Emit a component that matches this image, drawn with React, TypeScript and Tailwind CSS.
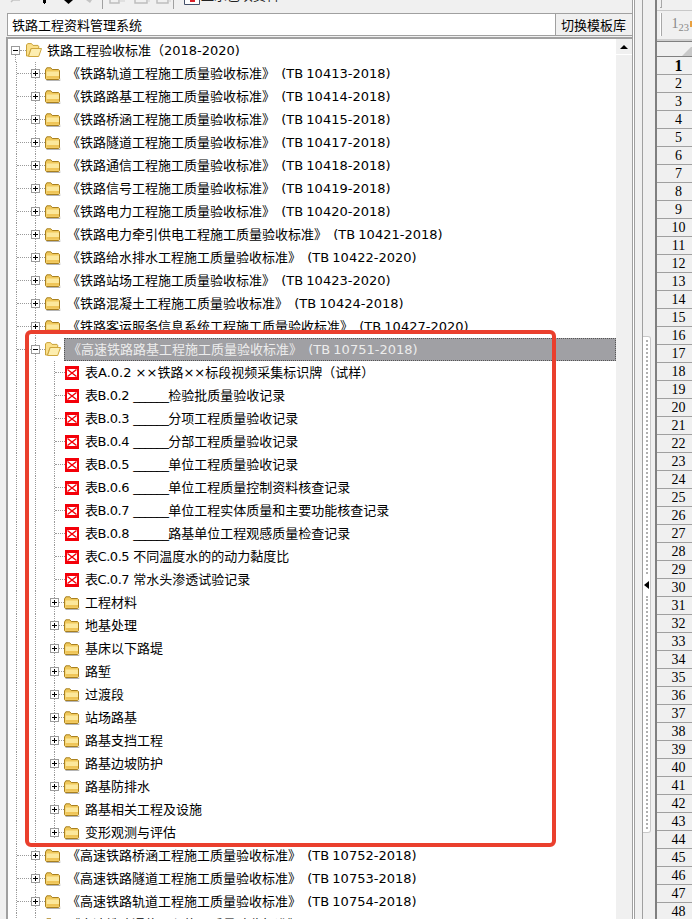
import type { ReactNode } from 'react';

const standards = [
  ['《铁路轨道工程施工质量验收标准》', '(TB 10413-2018)'],
  ['《铁路路基工程施工质量验收标准》', '(TB 10414-2018)'],
  ['《铁路桥涵工程施工质量验收标准》', '(TB 10415-2018)'],
  ['《铁路隧道工程施工质量验收标准》', '(TB 10417-2018)'],
  ['《铁路通信工程施工质量验收标准》', '(TB 10418-2018)'],
  ['《铁路信号工程施工质量验收标准》', '(TB 10419-2018)'],
  ['《铁路电力工程施工质量验收标准》', '(TB 10420-2018)'],
  ['《铁路电力牵引供电工程施工质量验收标准》', '(TB 10421-2018)'],
  ['《铁路给水排水工程施工质量验收标准》', '(TB 10422-2020)'],
  ['《铁路站场工程施工质量验收标准》', '(TB 10423-2020)'],
  ['《铁路混凝土工程施工质量验收标准》', '(TB 10424-2018)'],
  ['《铁路客运服务信息系统工程施工质量验收标准》', '(TB 10427-2020)'],
];

const forms = [
  '表A.0.2 ××铁路××标段视频采集标识牌（试样）',
  '表B.0.2 ______检验批质量验收记录',
  '表B.0.3 ______分项工程质量验收记录',
  '表B.0.4 ______分部工程质量验收记录',
  '表B.0.5 ______单位工程质量验收记录',
  '表B.0.6 ______单位工程质量控制资料核查记录',
  '表B.0.7 ______单位工程实体质量和主要功能核查记录',
  '表B.0.8 ______路基单位工程观感质量检查记录',
  '表C.0.5 不同温度水的的动力黏度比',
  '表C.0.7 常水头渗透试验记录',
];

const groups = [
  '工程材料',
  '地基处理',
  '基床以下路堤',
  '路堑',
  '过渡段',
  '站场路基',
  '路基支挡工程',
  '路基边坡防护',
  '路基防排水',
  '路基相关工程及设施',
  '变形观测与评估',
];

const moreStandards = [
  ['《高速铁路桥涵工程施工质量验收标准》', '(TB 10752-2018)'],
  ['《高速铁路隧道工程施工质量验收标准》', '(TB 10753-2018)'],
  ['《高速铁路轨道工程施工质量验收标准》', '(TB 10754-2018)'],
  ['《高速铁路通信工程施工质量验收标准》', '(TB 10755-2018)'],
];

function FolderClosed() {
  return (
    <svg width="16" height="14" viewBox="0 0 16 14" className="shrink-0">
      <path d="M1.5 13.5h13.5v-1" fill="none" stroke="#b5b5b5" />
      <path d="M.5 3 1.8.8h4L7.2 2.5h6.3l1 1v8.2l-.8.8H1.3l-.8-.8z" fill="#f0c95c" stroke="#a9801e" />
      <path d="M1.5 4.5h12.5v6.8l-.5.5h-11.500l-.5-.5z" fill="#fce89c" />
      <path d="M1.5 9h12.500v2.300l-.5.5h-11.500l-.5-.5z" fill="#efc558" />
    </svg>
  );
}

function FolderOpen() {
  return (
    <svg width="16" height="15" viewBox="0 0 16 15" className="shrink-0">
      <path d="M.5 13V2L1.700.6h3.800L7 2.400h5l.7.8v2.300H5L2.500 13z" fill="#fbe08a" stroke="#c9a23a" />
      <path d="M2.500 13.500 5.200 5.500h10.300l-2.800 8z" fill="#fdeeb0" stroke="#cfa63c" />
    </svg>
  );
}

function FormIcon() {
  return (
    <svg width="14" height="14" viewBox="0 0 14 14" className="shrink-0">
      <rect width="14" height="14" fill="#f40009" />
      <rect x="2" y="3" width="10" height="8" fill="#ffffff" />
      <path d="M2.500 3.500 11.500 10.500M11.500 3.500 2.500 10.500" stroke="#f40009" strokeWidth="1.500" />
    </svg>
  );
}

function Toggle({ open }: { open?: boolean }) {
  return (
    <div className="relative w-[9px] h-[9px] shrink-0 bg-white border border-[#9a9a9a]">
      <div className="absolute left-[1px] top-[3px] w-[5px] h-px bg-black" />
      {!open && <div className="absolute left-[3px] top-[1px] w-px h-[5px] bg-black" />}
    </div>
  );
}

// the vertical dotted line that runs down a tree level
function Guide({ width }: { width: string }) {
  return <div className={`h-full shrink-0 border-l border-dotted border-[#9a9a9a] ${width}`} />;
}

function Branch({ open, top = true }: { open?: boolean; top?: boolean }) {
  return (
    <div className="flex flex-col items-center w-[9px] h-full shrink-0">
      <div className={`flex-1 ${top ? 'border-l border-dotted border-[#9a9a9a]' : ''}`} />
      <Toggle open={open} />
      <div className="flex-1 border-l border-dotted border-[#9a9a9a]" />
    </div>
  );
}

function Dots({ width }: { width: string }) {
  return <div className={`h-0 shrink-0 border-t border-dotted border-[#9a9a9a] ${width}`} />;
}

function Row({ children }: { children: ReactNode }) {
  return <div className="flex items-center h-[23px] shrink-0 whitespace-pre text-black">{children}</div>;
}

function StandardRow({ name, code }: { name: string; code: string }) {
  return (
    <Row>
      <Guide width="w-[15px]" />
      <div className="w-[14px] -ml-[14px] shrink-0 border-t border-dotted border-[#9a9a9a] h-0" />
      <Branch />
      <Dots width="w-[5px]" />
      <FolderClosed />
      <span className="ml-[6px] [word-spacing:-1px]">
        {name}
        {'  '}
        {code}
      </span>
    </Row>
  );
}

function FormText({ text }: { text: string }) {
  if (text.startsWith('表A')) return <span className="ml-[6px]">{text}</span>;
  const cut = text.indexOf(' ');
  const rest = text.slice(cut + 1);
  const parts = rest.split('______');
  return (
    <span className="ml-[6px]">
      <span className="tracking-[-0.45px]">{text.slice(0, cut)}</span>{' '}
      {parts.length > 1 ? (
        <>
          <span className="tracking-[-0.65px]">______</span>
          {parts[1]}
        </>
      ) : (
        rest
      )}
    </span>
  );
}

function FormRow({ text }: { text: string }) {
  return (
    <Row>
      <Guide width="w-[19px]" />
      <Guide width="w-[19px]" />
      <div className="flex items-center h-full shrink-0 border-l border-dotted border-[#9a9a9a]">
        <Dots width="w-[10px]" />
      </div>
      <FormIcon />
      <FormText text={text} />
    </Row>
  );
}

function GroupRow({ text, last }: { text: string; last?: boolean }) {
  return (
    <Row>
      <Guide width="w-[19px]" />
      <Guide width="w-[15px]" />
      <div className="relative h-full w-[9px] shrink-0">
        <Branch />
        {last && <div className="absolute left-0 bottom-0 w-[9px] h-[6px] bg-white" />}
      </div>
      <Dots width="w-[5px]" />
      <FolderClosed />
      <span className="ml-[5px]">{text}</span>
    </Row>
  );
}

function Toolbar() {
  return (
    <div className="flex items-start h-[13px] -ml-[6px] shrink-0 overflow-hidden">
      <svg width="102" height="8" viewBox="0 0 102 8" className="shrink-0">
        <path d="M13 0h7M13 0l-2 2" stroke="#c4c4c4" strokeWidth="1.500" fill="none" />
        <path d="M43 0h3v3h-1v1h-1v-1h-1z" fill="#000" />
        <path d="M64 0h9l-4.500 4z" fill="#000" />
        <path d="M86 0h6l-2 3z" fill="#c4c4c4" />
      </svg>
      <div className="w-px h-[9px] bg-[#a0a0a0] shrink-0" />
      <svg width="70" height="5" viewBox="0 0 70 5" className="shrink-0">
        <path d="M7 0v3h9V0M32 0v3h12V0M54 0v3h11V0" stroke="#bdbdbd" strokeWidth="1.500" fill="none" />
        <path d="M16 1h6M44 1h3M65 1h3" stroke="#cfcfcf" fill="none" />
      </svg>
      <div className="w-px h-[9px] bg-[#a0a0a0] shrink-0" />
      <svg width="16" height="5" viewBox="0 0 16 5" className="ml-[10px] shrink-0">
        <path d="M.5 0v4.500h15V0" stroke="#44506a" fill="#ffffff" />
        <path d="M6 0h5v2H6z" fill="#d8202a" />
      </svg>
      <span className="ml-[1px] -mt-[12px] leading-[16px] text-[#222]">显示已填资料</span>
    </div>
  );
}

function TitleBar() {
  return (
    <div className="flex h-[23px] ml-[1px] shrink-0 bg-white border-t border-b border-l border-[#a0a0a0]">
      <div className="flex-1 pl-[4px] leading-[24px] text-black">铁路工程资料管理系统</div>
      <div className="w-[77px] bg-[#f0f0f0] border-l border-[#a0a0a0] pl-[5px] leading-[24px] text-black">切换模板库</div>
    </div>
  );
}

function ScrollBar() {
  return (
    <div className="w-[16px] shrink-0 bg-[#f0f0f0]">
      <div className="flex items-center justify-center h-[16px] border-b border-white">
        <div className="w-0 h-0 border-x-[4px] border-x-transparent border-b-[4px] border-b-black" />
      </div>
    </div>
  );
}

function Tree() {
  return (
    <div className="flex flex-1 min-h-0 mt-[1px] bg-white border-t-2 border-l-2 border-[#a0a0a0] overflow-hidden">
      <div className="flex flex-col flex-1 min-w-0 pl-[8px]">
        <Row>
          <div className="-ml-[5px] h-full flex">
            <Branch open top={false} />
          </div>
          <Dots width="w-[6px]" />
          <FolderOpen />
          <span className="ml-[5px]">铁路工程验收标准（2018-2020)</span>
        </Row>
        {standards.map(([name, code]) => (
          <StandardRow key={code} name={name} code={code} />
        ))}
        <Row>
          <Guide width="w-[15px]" />
          <div className="w-[14px] -ml-[14px] shrink-0 border-t border-dotted border-[#9a9a9a] h-0" />
          <Branch open />
          <Dots width="w-[5px]" />
          <FolderOpen />
          <div className="flex items-center flex-1 h-[23px] ml-[3px] pl-[3px] bg-[#a0a0a4] border border-dotted border-[#555] text-[#ececec] [word-spacing:-1px]">
            《高速铁路路基工程施工质量验收标准》{'  '}(TB 10751-2018)
          </div>
        </Row>
        {forms.map((text) => (
          <FormRow key={text} text={text} />
        ))}
        {groups.map((text, i) => (
          <GroupRow key={text} text={text} last={i === groups.length - 1} />
        ))}
        {moreStandards.map(([name, code]) => (
          <StandardRow key={code} name={name} code={code} />
        ))}
      </div>
      <ScrollBar />
    </div>
  );
}

function Splitter() {
  return (
    <div className="flex w-[23px] h-full shrink-0">
      <div className="w-px bg-[#a0a0a0]" />
      <div className="w-px bg-white" />
      <div className="w-px bg-[#a0a0a0]" />
      <div className="w-[7px]" />
      <div className="w-px bg-[#a0a0a0]" />
      <div className="flex-1 pt-[336px]">
        <div className="flex flex-col items-center w-[8px] h-[497px] bg-white border-y border-r border-[#c8c8c8] rounded-tr-[3px] rounded-br-[3px]">
          <div className="flex-1 my-[3px] border-l-2 border-dotted border-[#b0b0b0]" />
          <div className="w-0 h-0 my-[4px] border-y-[4px] border-y-transparent border-r-[5px] border-r-black" />
          <div className="flex-1 my-[3px] border-l-2 border-dotted border-[#b0b0b0]" />
        </div>
      </div>
    </div>
  );
}

function NumberColumn() {
  const rows = Array.from({ length: 48 }, (_, i) => i + 1);
  return (
    <div className="flex flex-col flex-1 min-w-0 h-full overflow-hidden border-l-2 border-[#808080]">
      <div className="flex flex-col h-[41px] shrink-0">
        <div className="flex h-[11px] shrink-0 border-b border-[#c8c8c8]">
          <div className="ml-[3px] w-[2px] h-[8px] border-r border-b border-[#a8a8a8]" />
        </div>
        <div className="flex flex-1 pt-[2px] border-b-2 border-[#d0d0d0]">
          <div className="ml-[3px] w-[3px] h-[23px] bg-white border-r border-[#a8a8a8]" />
          <div className="ml-[9px] text-[14px] leading-[22px] whitespace-nowrap text-[#888] font-['Liberation_Serif',serif]">
            1<sub>2</sub><sub>3</sub>
          </div>
          <div className="ml-[1px] mt-[8px] w-[3px] h-[6px] bg-[#e8a040]" />
        </div>
      </div>
      <div className="relative flex h-[16px] shrink-0 border-t border-b border-[#808080]">
        <svg width="10" height="9" viewBox="0 0 10 9" className="absolute right-0 bottom-0">
          <path d="M0 9 9 0h1v9z" fill="#c8c8c8" />
        </svg>
      </div>
      {rows.map((n) => (
        <div
          key={n}
          className={`flex items-center justify-center h-[18px] w-[40px] shrink-0 pl-[3px] border-b border-[#a0a0a0] text-[14px] text-black font-['Liberation_Serif',serif] ${n === 1 ? 'font-bold text-[16px]' : ''}`}
        >
          {n}
        </div>
      ))}
    </div>
  );
}

export default function App() {
  return (
    <div className="relative flex w-[692px] h-[919px] overflow-hidden bg-[#f0f0f0] text-[13px] leading-[18px] font-['DejaVu_Sans','Noto_Sans_CJK_SC',sans-serif]">
      <div className="flex flex-col w-[632px] h-full shrink-0 pl-[6px]">
        <Toolbar />
        <TitleBar />
        <Tree />
      </div>
      <Splitter />
      <NumberColumn />
      <div className="absolute left-[25px] top-[330px] w-[531px] h-[517px] border-4 border-[#ea3f2d] rounded-md pointer-events-none" />
    </div>
  );
}
